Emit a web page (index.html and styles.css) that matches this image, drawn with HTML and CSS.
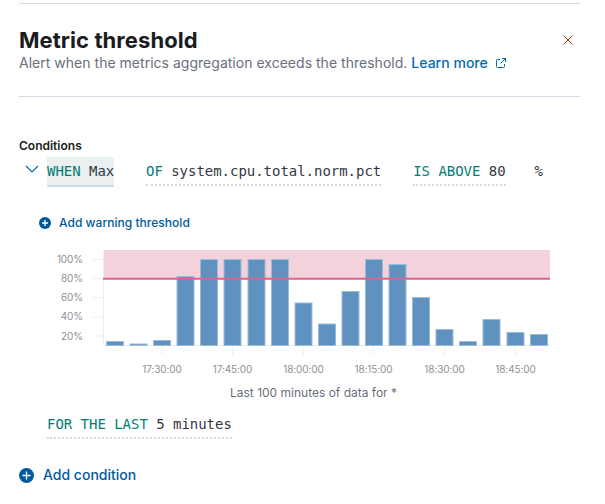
FILE: index.html
```html
<!DOCTYPE html>
<html lang="en">
  <head>
    <meta charset="utf-8">
    <title>Metric threshold</title>
    <link rel="stylesheet" href="styles.css">
  </head>
  <body>
    <div class="flyout">
      <header class="head">
        <div class="head-text">
          <h1>Metric threshold</h1>
          <p>Alert when the metrics aggregation exceeds the threshold. <a class="learn" href="#">Learn more
            <svg class="ext" width="12" height="12" viewBox="0 0 12 12"><path d="M5 2.5H2.5a1 1 0 0 0-1 1v6a1 1 0 0 0 1 1h6a1 1 0 0 0 1-1V7M7 1.5h3.5V5M10.5 1.5 5.5 6.5" fill="none" stroke="#006bb4" stroke-width="1"/></svg></a></p>
        </div>
        <svg class="close" width="12" height="12" viewBox="0 0 12 12"><path d="M1.5 1.5l9 9M10.5 1.5l-9 9" stroke="#bd271e" stroke-width="1" fill="none"/></svg>
      </header>

      <h2 class="cond-title">Conditions</h2>
      <div class="expr-row">
        <svg class="chevron" width="14" height="8" viewBox="0 0 14 8"><path d="M1 1l6 6 6-6" fill="none" stroke="#006bb4" stroke-width="1.2"/></svg>
        <span class="expr expr-active"><b>WHEN</b> Max</span>
        <span class="expr expr-of"><b>OF</b> system.cpu.total.norm.pct</span>
        <span class="expr expr-above"><b>IS ABOVE</b> 80</span>
        <span class="unit">%</span>
      </div>

      <a class="add add-small" href="#">
        <svg width="12" height="12" viewBox="0 0 12 12"><circle cx="6" cy="6" r="6" fill="#005a9e"/><path d="M6 3v6M3 6h6" stroke="#fff" stroke-width="1.3"/></svg>
        Add warning threshold
      </a>

      <svg class="chart" width="533" height="134" viewBox="47 245 533 134">
        <rect class="band" x="103" y="250" width="447" height="29"/>
        <g class="grid">
          <path d="M92 259.5h11M92 278.5h11M92 297.5h11M92 317h11M92 336h11"/>
          <path d="M103.500 250v95M103 345.500h447"/>
          <path d="M162 345v10M232.500 345v10M303.500 345v10M373.500 345v10M444.500 345v10M515.500 345v10"/>
        </g>
        <g class="ylabels">
          <text x="83" y="263">100%</text>
          <text x="83" y="282">80%</text>
          <text x="83" y="301">60%</text>
          <text x="83" y="320">40%</text>
          <text x="83" y="340">20%</text>
        </g>
        <g class="bars">
          <rect x="106.500" y="341.500" width="17" height="4"/>
          <rect x="130" y="344" width="17" height="1.500"/>
          <rect x="153.500" y="340.500" width="17" height="5"/>
          <rect x="177" y="276.500" width="17" height="69"/>
          <rect x="200.500" y="259.500" width="17" height="86"/>
          <rect x="224" y="259.500" width="17" height="86"/>
          <rect x="248" y="259.500" width="17" height="86"/>
          <rect x="271.500" y="259.500" width="17" height="86"/>
          <rect x="295" y="303" width="17" height="42.500"/>
          <rect x="318.500" y="324" width="17" height="21.500"/>
          <rect x="342" y="291.500" width="17" height="54"/>
          <rect x="365.500" y="259.500" width="17" height="86"/>
          <rect x="389" y="264.500" width="17" height="81"/>
          <rect x="412.500" y="297.500" width="17" height="48"/>
          <rect x="436" y="329.500" width="17" height="16"/>
          <rect x="459.500" y="341.500" width="17" height="4"/>
          <rect x="483" y="319.500" width="17" height="26"/>
          <rect x="507" y="332.500" width="17" height="13"/>
          <rect x="530.500" y="334.500" width="17" height="11"/>
        </g>
        <path class="limit" d="M103 278.700h447"/>
        <g class="xlabels">
          <text x="162" y="373">17:30:00</text>
          <text x="232.500" y="373">17:45:00</text>
          <text x="303.500" y="373">18:00:00</text>
          <text x="373.500" y="373">18:15:00</text>
          <text x="444.500" y="373">18:30:00</text>
          <text x="515.500" y="373">18:45:00</text>
        </g>
      </svg>
      <p class="caption">Last 100 minutes of data for *</p>

      <div class="for-row">
        <span class="expr"><b>FOR THE LAST</b> 5 minutes</span>
      </div>

      <a class="add add-big" href="#">
        <svg width="15" height="15" viewBox="0 0 15 15"><circle cx="7.500" cy="7.500" r="7.500" fill="#005a9e"/><path d="M7.500 3.500v8M3.500 7.500h8" stroke="#fff" stroke-width="1.300"/></svg>
        Add condition
      </a>
    </div>
  </body>
</html>
```

FILE: styles.css
```css
html {
  margin: 0;
  padding: 0;
}
body {
  margin: 0;
  background-color: #fff;
  font-family: Inter, "Liberation Sans", sans-serif;
  color: #343741;
}
.flyout {
  padding: 3px 25px 0 19px;
}
.head {
  display: flex;
  justify-content: space-between;
  height: 92px;
  border-top: 1px solid #d3dae6;
  border-bottom: 1px solid #d3dae6;
  box-sizing: content-box;
}
h1 {
  margin: 21px 0 0;
  font-size: 22px;
  line-height: 30px;
  font-weight: 700;
  letter-spacing: 0.07px;
  color: #1a1c21;
}
.head-text p {
  margin: -1px 0 0;
  font-size: 14px;
  line-height: 17px;
  letter-spacing: 0.02px;
  color: #69707d;
}
.learn {
  color: #006bb4;
  font-weight: 500;
  text-decoration: none;
}
.ext {
  margin-left: 3px;
  vertical-align: -1px;
}
.close {
  margin: 30px 6px 0 0;
}
.cond-title {
  margin: 41px 0 0;
  font-size: 12px;
  line-height: 15px;
  font-weight: 600;
  color: #1a1c21;
}
.expr-row {
  display: flex;
  align-items: flex-start;
  height: 30px;
  margin-top: 4px;
}
.chevron {
  margin: 8px 0 0 6px;
}
.expr {
  display: inline-block;
  height: 29px;
  font-family: "DejaVu Sans Mono", "Liberation Mono", monospace;
  font-size: 14px;
  line-height: 28px;
  letter-spacing: -0.03px;
  white-space: nowrap;
  color: #343741;
  border-bottom: 2px dotted #d3dae6;
  box-sizing: border-box;
}
.expr b {
  font-weight: 400;
  color: #017d73;
}
.expr-active {
  width: 67px;
  height: 30px;
  margin-left: 8px;
  background-color: #e9f0ef;
  border-bottom: 2px solid #d3dae6;
}
.expr-of {
  margin-left: 32px;
}
.expr-above {
  margin-left: 32px;
}
.unit {
  margin-left: 29px;
  font-family: "DejaVu Sans Mono", monospace;
  font-size: 14px;
  line-height: 28px;
}
.add {
  display: flex;
  align-items: center;
  text-decoration: none;
  color: #005a9e;
  font-weight: 500;
}
.add-small {
  gap: 8px;
  margin: 28px 0 0 20px;
  font-size: 12px;
  line-height: 16px;
  letter-spacing: 0.03px;
}
.chart {
  display: block;
  margin: 14px 0 0 28px;
}
.chart text {
  font-size: 10px;
  letter-spacing: -0.1px;
  fill: #8d8f96;
}
.band {
  fill: #f3d2dc;
}
.grid path {
  fill: none;
  stroke: #eeeff1;
  stroke-width: 1;
}
.ylabels text {
  text-anchor: end;
}
.xlabels text {
  text-anchor: middle;
}
.bars rect {
  fill: #6092c0;
  stroke: #9cbcdb;
  stroke-width: 1;
}
.limit {
  fill: none;
  stroke: #e0628e;
  stroke-width: 2;
}
.caption {
  width: 533px;
  margin: 6px 0 0 28px;
  text-align: center;
  font-size: 12px;
  line-height: 16px;
  color: #69707d;
}
.for-row {
  margin: 9px 0 0 28px;
}
.add-big {
  gap: 9px;
  margin: 27px 0 0;
  font-size: 14px;
  line-height: 18px;
}
```
